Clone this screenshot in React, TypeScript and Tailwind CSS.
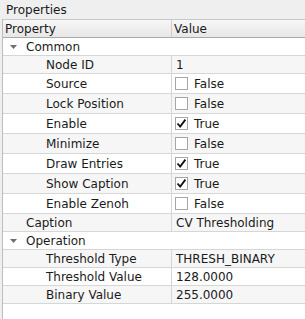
import React from "react";

type Row =
  | { kind: "cat"; label: string; bg: boolean }
  | { kind: "text"; label: string; value: string; indent: number; bg: boolean }
  | { kind: "check"; label: string; value: boolean; bg: boolean };

const rows: Row[] = [
  { kind: "cat", label: "Common", bg: false },
  { kind: "text", label: "Node ID", value: "1", indent: 2, bg: true },
  { kind: "check", label: "Source", value: false, bg: false },
  { kind: "check", label: "Lock Position", value: false, bg: true },
  { kind: "check", label: "Enable", value: true, bg: false },
  { kind: "check", label: "Minimize", value: false, bg: true },
  { kind: "check", label: "Draw Entries", value: true, bg: false },
  { kind: "check", label: "Show Caption", value: true, bg: true },
  { kind: "check", label: "Enable Zenoh", value: false, bg: false },
  { kind: "text", label: "Caption", value: "CV Thresholding", indent: 1, bg: true },
  { kind: "cat", label: "Operation", bg: false },
  { kind: "text", label: "Threshold Type", value: "THRESH_BINARY", indent: 2, bg: true },
  { kind: "text", label: "Threshold Value", value: "128.0000", indent: 2, bg: false },
  { kind: "text", label: "Binary Value", value: "255.0000", indent: 2, bg: true },
];

function Arrow() {
  return (
    <svg width="7" height="4" viewBox="0 0 7 4" className="block">
      <path d="M0 0 L7 0 L3.5 4 Z" fill="#6e6e6e" />
    </svg>
  );
}

function Check({ on }: { on: boolean }) {
  return (
    <div className="w-[13px] h-[13px] border border-[#a6a6a6] bg-white flex items-center justify-center">
      {on && (
        <svg width="11" height="11" viewBox="0 0 11 11" className="block">
          <path d="M1.5 5.5 L4.2 8.6 L9.4 1.6" fill="none" stroke="#111" strokeWidth="1.8" />
        </svg>
      )}
    </div>
  );
}

export default function App() {
  return (
    <div
      className="w-[305px] h-[319px] bg-[#efefef] overflow-hidden text-[12px] text-[#1a1a1a]"
      style={{ fontFamily: '"DejaVu Sans", sans-serif' }}
    >
      <div className="h-[19px] pl-[6px] flex items-center leading-none">Properties</div>
      <div className="ml-[2px] border-l border-[#bdbdbd] bg-white h-[300px]">
        <div className="h-[19px] border-t border-[#c8c8c8] border-b border-b-[#a9a9a9] bg-gradient-to-b from-[#f7f7f7] to-[#e7e7e7] grid grid-cols-[169px_1fr]">
          <div className="border-r border-[#cfcfcf] pl-[2px] flex items-center leading-none">Property</div>
          <div className="pl-[2px] flex items-center leading-none">Value</div>
        </div>
        {rows.map((r, i) => {
          const bg = r.bg ? "bg-[#f6f6f6]" : "bg-white";
          if (r.kind === "cat") {
            return (
              <div key={i} className={`h-[18px] border-b border-[#d6d6d6] flex items-center ${bg}`}>
                <div className="w-[23px] pl-[7px] flex items-center">
                  <Arrow />
                </div>
                <span className="leading-none">{r.label}</span>
              </div>
            );
          }
          const h = r.kind === "check" ? "h-[20px]" : "h-[18px]";
          const indent = r.kind === "text" && r.indent === 1 ? "pl-[23px]" : "pl-[43px]";
          return (
            <div key={i} className={`${h} border-b border-[#d6d6d6] grid grid-cols-[169px_1fr] ${bg}`}>
              <div className={`border-r border-[#d6d6d6] ${indent} flex items-center leading-none`}>{r.label}</div>
              {r.kind === "check" ? (
                <div className="pl-[3px] flex items-center gap-[6px] leading-none">
                  <Check on={r.value} />
                  <span>{r.value ? "True" : "False"}</span>
                </div>
              ) : (
                <div className="pl-[4px] flex items-center leading-none">{r.value}</div>
              )}
            </div>
          );
        })}
      </div>
    </div>
  );
}
